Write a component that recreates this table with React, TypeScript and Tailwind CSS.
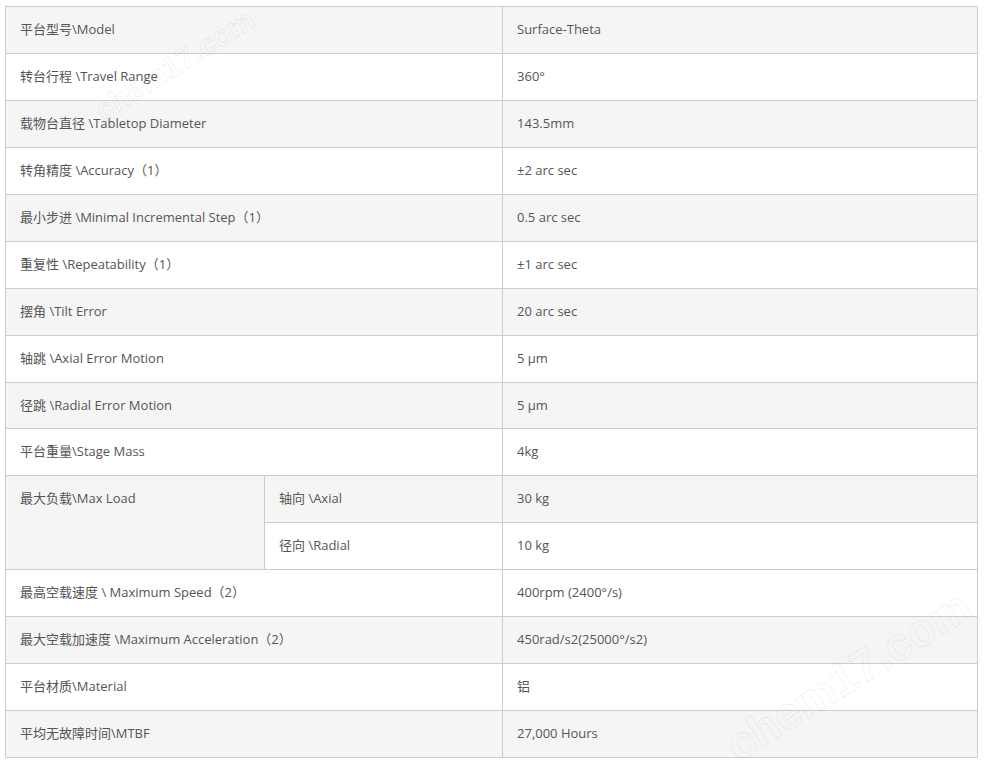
const rows: { label: string; value: string }[] = [
  { label: "平台型号\\Model", value: "Surface-Theta" },
  { label: "转台行程 \\Travel Range", value: "360°" },
  { label: "载物台直径 \\Tabletop Diameter", value: "143.5mm" },
  { label: "转角精度 \\Accuracy（1）", value: "±2 arc sec" },
  { label: "最小步进 \\Minimal Incremental Step（1）", value: "0.5 arc sec" },
  { label: "重复性 \\Repeatability（1）", value: "±1 arc sec" },
  { label: "摆角 \\Tilt Error", value: "20 arc sec" },
  { label: "轴跳 \\Axial Error Motion", value: "5 µm" },
  { label: "径跳 \\Radial Error Motion", value: "5 µm" },
  { label: "平台重量\\Stage Mass", value: "4kg" },
];

const tail: { label: string; value: string }[] = [
  { label: "最高空载速度 \\ Maximum Speed（2）", value: "400rpm (2400°/s)" },
  { label: "最大空载加速度 \\Maximum Acceleration（2）", value: "450rad/s2(25000°/s2)" },
  { label: "平台材质\\Material", value: "铝" },
  { label: "平均无故障时间\\MTBF", value: "27,000 Hours" },
];

const cell = "border border-[#cccccc] px-[14px] py-[13px] text-left align-top leading-[19.94px]";

const wm = { WebkitTextStroke: "1px rgba(0,0,0,0.07)", fontFamily: '"Liberation Sans", sans-serif' };

export default function App() {
  return (
    <div
      className="relative min-h-[762px] w-[985px] overflow-hidden bg-white text-[13px] text-[#555555]"
      style={{ fontFamily: '"Open Sans", "Noto Sans CJK SC", sans-serif' }}
    >
      <div className="pl-[5px] pt-[6px]">
        <table className="w-[972px] table-fixed border-collapse">
          <colgroup>
            <col className="w-[259px]" />
            <col className="w-[238px]" />
            <col className="w-[475px]" />
          </colgroup>
          <tbody>
            {rows.map((r, i) => (
              <tr key={r.label} className={i % 2 === 0 ? "bg-[#f5f5f5]" : "bg-white"}>
                <td colSpan={2} className={cell}>
                  {r.label}
                </td>
                <td className={cell}>{r.value}</td>
              </tr>
            ))}
            <tr className="bg-[#f5f5f5]">
              <td rowSpan={2} className={cell}>
                最大负载\Max Load
              </td>
              <td className={cell}>轴向 \Axial</td>
              <td className={cell}>30 kg</td>
            </tr>
            <tr className="bg-white">
              <td className={cell}>径向 \Radial</td>
              <td className={cell}>10 kg</td>
            </tr>
            {tail.map((r, i) => (
              <tr key={r.label} className={i % 2 === 0 ? "bg-white" : "bg-[#f5f5f5]"}>
                <td colSpan={2} className={cell}>
                  {r.label}
                </td>
                <td className={cell}>{r.value}</td>
              </tr>
            ))}
          </tbody>
        </table>
      </div>

      {/* watermarks */}
      <div
        className="pointer-events-none absolute left-[84px] top-[50px] -rotate-[32deg] whitespace-nowrap text-[30px] font-bold leading-none text-transparent"
        style={wm}
      >
        chem17.com
      </div>
      <div
        className="pointer-events-none absolute left-[709px] top-[652px] -rotate-[32deg] whitespace-nowrap text-[46px] font-bold leading-none text-transparent"
        style={wm}
      >
        chem17.com
      </div>
    </div>
  );
}
